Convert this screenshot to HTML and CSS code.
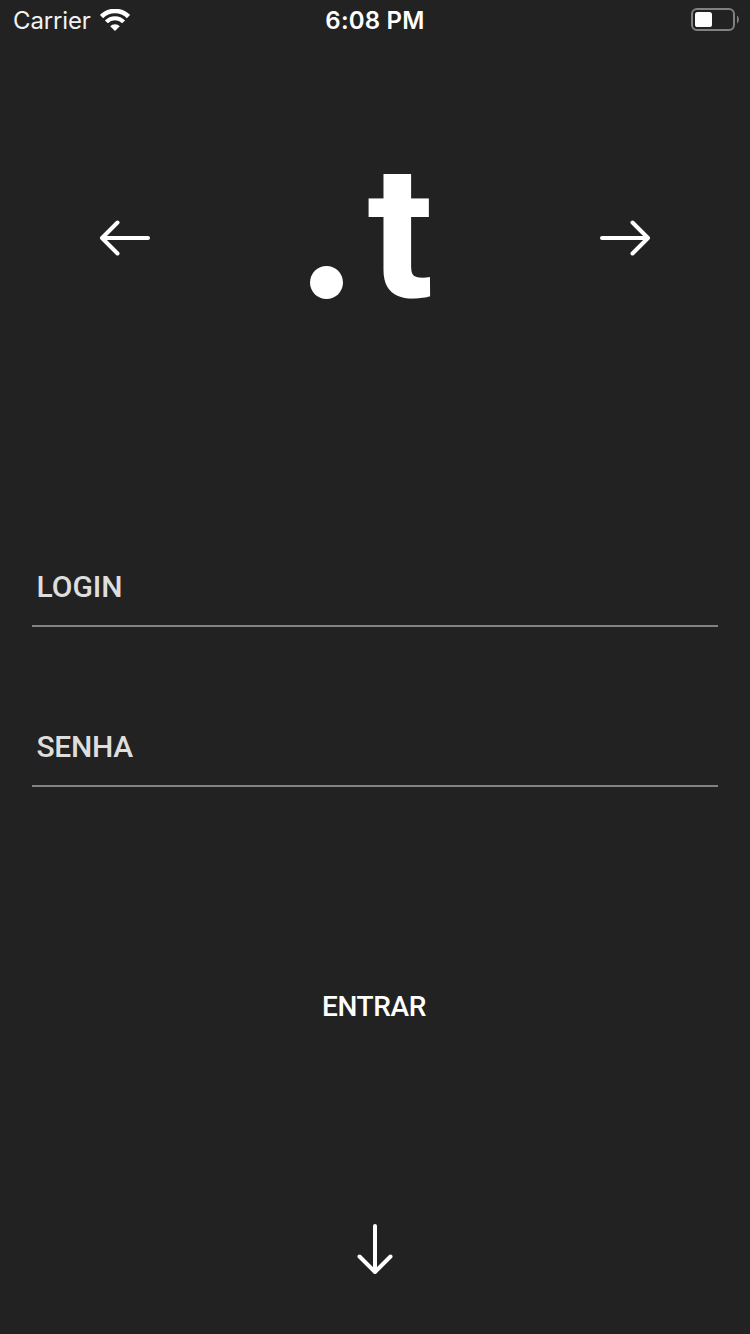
FILE: index.html
```html
<!DOCTYPE html>
<html lang="pt-BR">
<head>
<meta charset="utf-8">
<title>Login</title>
<link rel="stylesheet" href="styles.css">
</head>
<body>
<div class="screen">
  <header class="status">
    <div class="status-left">
      <span class="carrier">Carrier</span>
      <svg class="wifi" width="30" height="22" viewBox="0 0 30 22" fill="none" stroke="#fff">
        <path d="M1.5 7.6a19 19 0 0 1 27 0" stroke-width="4.6"/>
        <path d="M6.4 12.9a12 12 0 0 1 17.2 0" stroke-width="4.2"/>
        <path d="M15 21.9l-4.8-4.6a6.6 6.6 0 0 1 9.6 0z" fill="#fff" stroke="none"/>
      </svg>
    </div>
    <span class="time">6:08 PM</span>
    <svg class="battery" width="50" height="24" viewBox="0 0 50 24">
      <rect x="2" y="2" width="42" height="21" rx="5" fill="none" stroke="#818181" stroke-width="2"/>
      <rect x="5" y="5" width="17" height="15" rx="2.6" fill="#fff"/>
      <path d="M47 8.5c2.5 1.8 2.5 6.2 0 8z" fill="#818181"/>
    </svg>
  </header>
  <section class="brand">
    <svg class="arrow" width="52" height="38" viewBox="0 0 52 38"><path d="M49 19H3M18.5 3.5L3 19l15.5 15.5"/></svg>
    <div class="logo">
      <span class="logo-dot"></span>
      <svg class="logo-letter" width="76" height="140" viewBox="0 0 76 140"><text class="letter" transform="translate(2.5 129) scale(1.03 .98)">t</text></svg>
    </div>
    <svg class="arrow" width="52" height="38" viewBox="0 0 52 38"><path d="M3 19h46M33.5 3.5L49 19 33.5 34.5"/></svg>
  </section>
  <form class="form">
    <label class="field">LOGIN</label>
    <label class="field field-password">SENHA</label>
    <button class="submit" type="button">ENTRAR</button>
  </form>
  <footer class="footer">
    <svg class="arrow" width="38" height="52" viewBox="0 0 38 52"><path d="M19 3v46M3.5 33.5L19 49l15.5-15.5"/></svg>
  </footer>
</div>
</body>
</html>
```
FILE: styles.css
```css
* { box-sizing: border-box; }
body { margin: 0; background: #222; color: #fff; font-family: Roboto, sans-serif; }
.screen { width: 750px; height: 1334px; display: flex; flex-direction: column; overflow: hidden; }
.status { height: 40px; display: grid; grid-template-columns: 1fr auto 1fr; align-items: center; padding: 0 10px 0 13px; font: 24px/40px Inter, sans-serif; }
.status-left { display: flex; align-items: center; gap: 9px; }
.carrier { color: #f2f2f2; letter-spacing: -0.15px; padding-top: 2px; line-height: 38px; }
.time { font-weight: 600; letter-spacing: 0.2px; padding: 2px 3px 0 0; line-height: 38px; }
.battery { justify-self: end; margin-bottom: 2px; }
.brand { height: 396px; display: flex; justify-content: space-between; align-items: center; padding: 0 99px; }
.arrow { display: block; fill: none; stroke: #fff; stroke-width: 4; stroke-linecap: round; stroke-linejoin: round; }
.logo { width: 132px; height: 140px; display: flex; align-items: flex-end; justify-content: space-between; }
.logo-dot { width: 33px; height: 33px; border-radius: 50%; background: #fff; margin: 0 0 9px 1px; }
.logo-letter { overflow: visible; }
.letter { font: 700 190px/1 Roboto, sans-serif; fill: #fff; }
.form { height: 778px; padding: 114px 32px 0; display: flex; flex-direction: column; }
.field { height: 77px; margin-bottom: 83px; padding: 18px 0 0 4.5px; border-bottom: 2px solid #828282; font-size: 30px; line-height: 38px; font-weight: 500; color: #dedede; }
.field-password { letter-spacing: -0.3px; }
.submit { align-self: center; margin: 117px 2px 0 0; padding: 0; border: 0; background: none; color: #fff; font: 500 28px/40px Roboto, sans-serif; letter-spacing: -0.35px; }
.footer { display: flex; justify-content: center; padding-top: 9px; }
```
